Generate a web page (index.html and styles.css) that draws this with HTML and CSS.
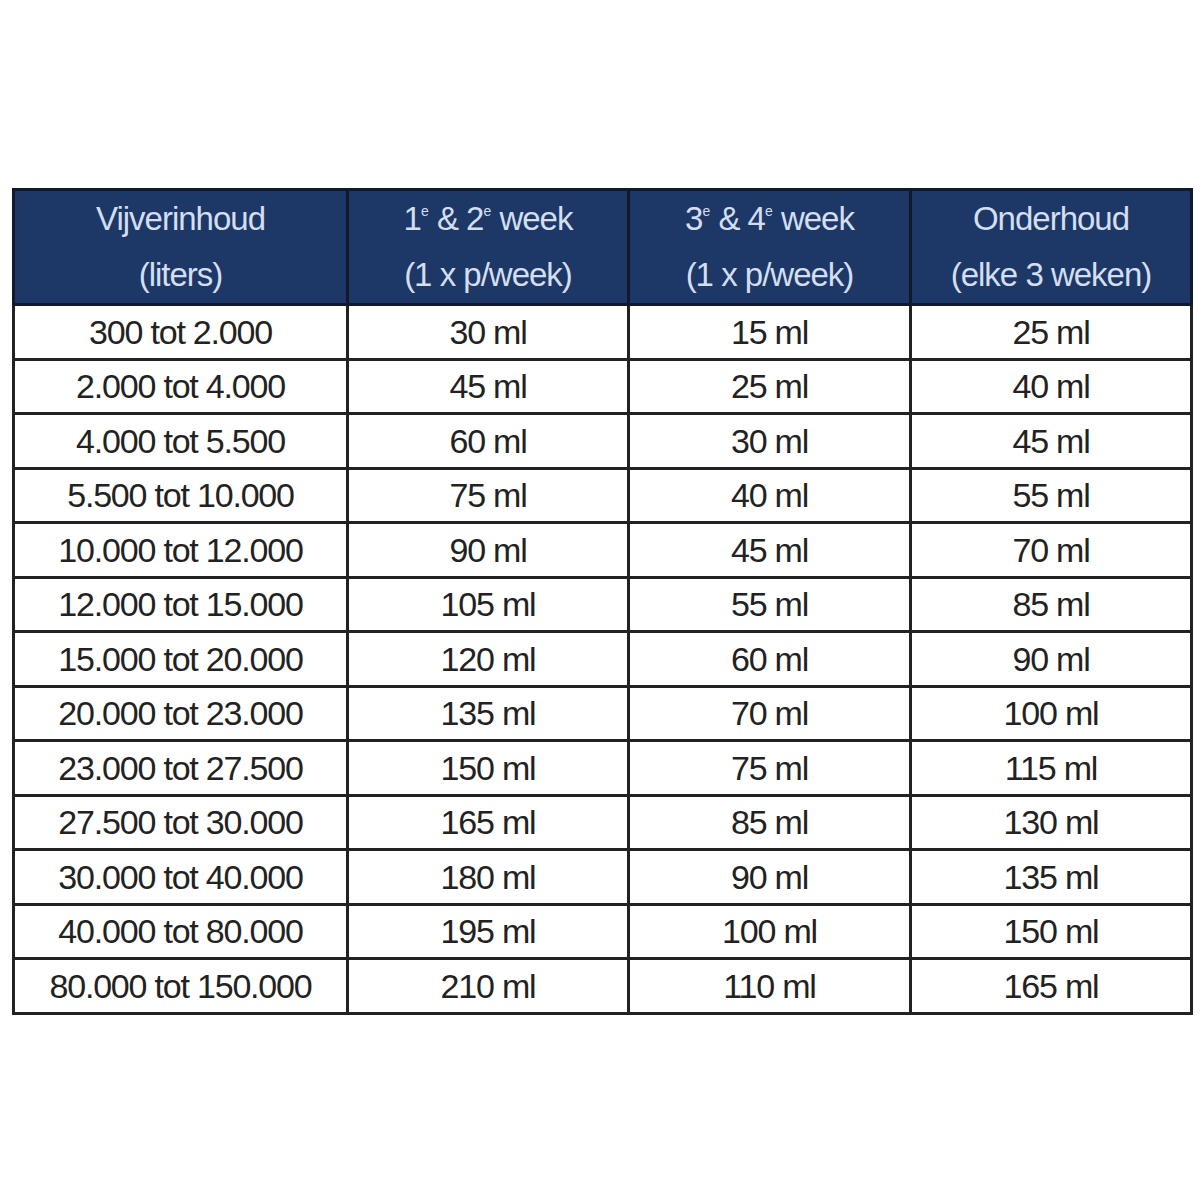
FILE: index.html
```html
<!DOCTYPE html>
<html lang="nl">
<head>
<meta charset="utf-8">
<title>Dosering</title>
<link rel="stylesheet" href="styles.css">
</head>
<body>
<table class="dose">
  <colgroup>
    <col class="c1"><col class="c2"><col class="c3"><col class="c4">
  </colgroup>
  <thead>
    <tr>
      <th>Vijverinhoud<br>(liters)</th>
      <th>1<sup>e</sup> &amp; 2<sup>e</sup> week<br>(1 x p/week)</th>
      <th>3<sup>e</sup> &amp; 4<sup>e</sup> week<br>(1 x p/week)</th>
      <th>Onderhoud<br>(elke 3 weken)</th>
    </tr>
  </thead>
  <tbody>
    <tr><td>300 tot 2.000</td><td>30 ml</td><td>15 ml</td><td>25 ml</td></tr>
    <tr><td>2.000 tot 4.000</td><td>45 ml</td><td>25 ml</td><td>40 ml</td></tr>
    <tr><td>4.000 tot 5.500</td><td>60 ml</td><td>30 ml</td><td>45 ml</td></tr>
    <tr><td>5.500 tot 10.000</td><td>75 ml</td><td>40 ml</td><td>55 ml</td></tr>
    <tr><td>10.000 tot 12.000</td><td>90 ml</td><td>45 ml</td><td>70 ml</td></tr>
    <tr><td>12.000 tot 15.000</td><td>105 ml</td><td>55 ml</td><td>85 ml</td></tr>
    <tr><td>15.000 tot 20.000</td><td>120 ml</td><td>60 ml</td><td>90 ml</td></tr>
    <tr><td>20.000 tot 23.000</td><td>135 ml</td><td>70 ml</td><td>100 ml</td></tr>
    <tr><td>23.000 tot 27.500</td><td>150 ml</td><td>75 ml</td><td>115 ml</td></tr>
    <tr><td>27.500 tot 30.000</td><td>165 ml</td><td>85 ml</td><td>130 ml</td></tr>
    <tr><td>30.000 tot 40.000</td><td>180 ml</td><td>90 ml</td><td>135 ml</td></tr>
    <tr><td>40.000 tot 80.000</td><td>195 ml</td><td>100 ml</td><td>150 ml</td></tr>
    <tr><td>80.000 tot 150.000</td><td>210 ml</td><td>110 ml</td><td>165 ml</td></tr>
  </tbody>
</table>
</body>
</html>
```

FILE: styles.css
```css
html, body {
  margin: 0;
  padding: 0;
  background: #ffffff;
}
body {
  font-family: "Liberation Sans", Arial, sans-serif;
}
.dose {
  margin: 188px 0 0 12px;
  border-collapse: collapse;
  table-layout: fixed;
  width: 1178px;
  border: 3px solid #1a1a1a;
}
.c1 { width: 334px; }
.c2 { width: 281px; }
.c3 { width: 282px; }
.c4 { width: 281px; }
.dose th {
  background: #1d3866;
  color: #d3def0;
  font-weight: normal;
  font-size: 33px;
  letter-spacing: -1px;
  line-height: 56px;
  height: 112px;
  padding: 0;
  border: 3px solid #111a2c;
  text-align: center;
  vertical-align: middle;
}
.dose th sup {
  font-size: 14px;
  line-height: 0;
  vertical-align: 14px;
  letter-spacing: 0;
}
.dose td {
  height: 51.5px;
  padding: 0;
  border: 3px solid #222222;
  text-align: center;
  vertical-align: middle;
  font-size: 34px;
  letter-spacing: -1.2px;
  color: #222222;
  line-height: 1;
}
```
